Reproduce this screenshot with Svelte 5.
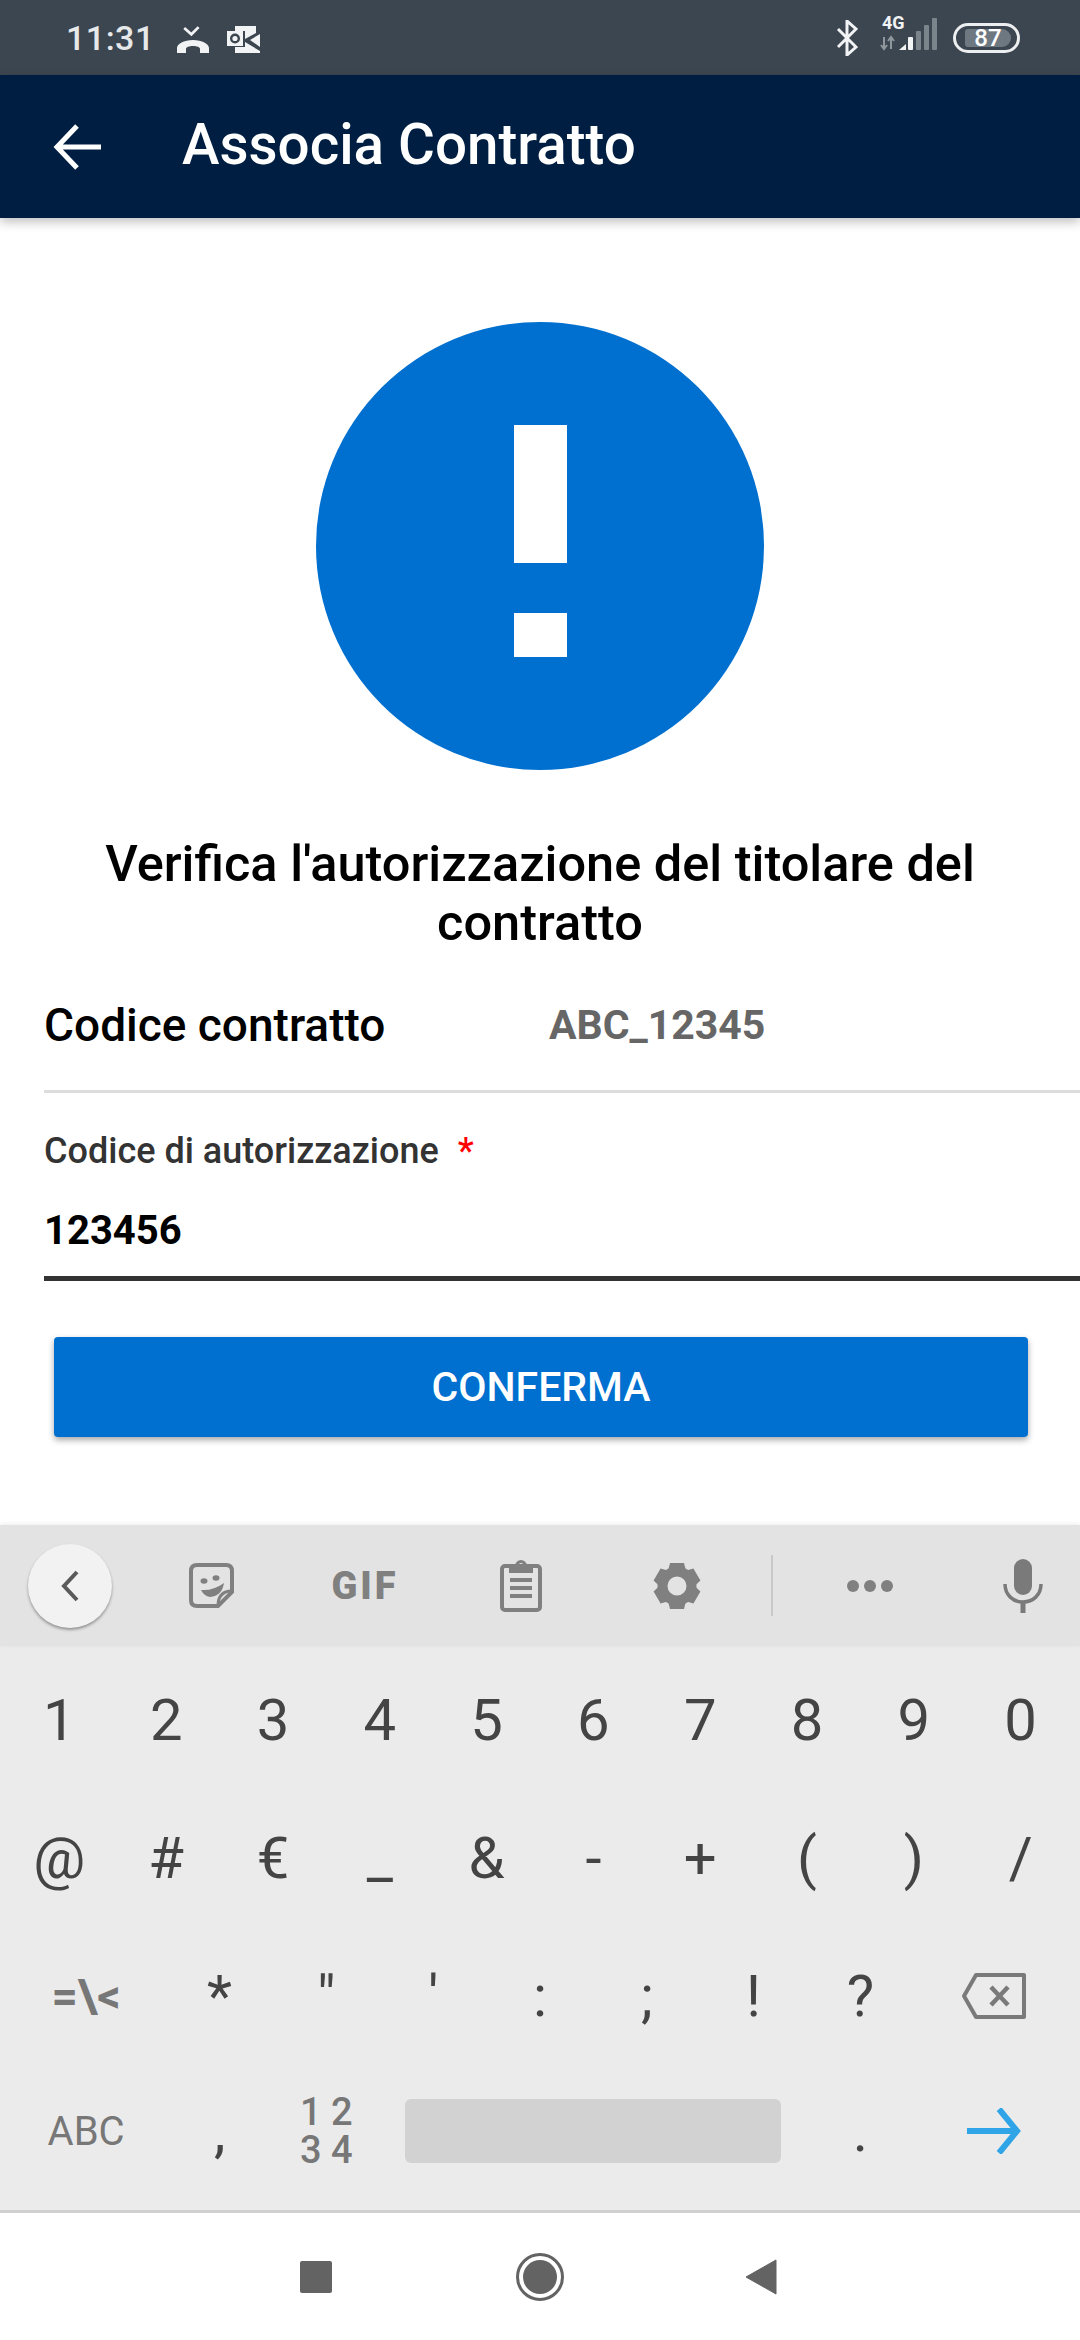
<script lang="ts">
	const digits = ['1', '2', '3', '4', '5', '6', '7', '8', '9', '0'];
	const symbols = ['@', '#', '€', '_', '&', '-', '+', '(', ')', '/'];
	const punctuation = ['*', '"', "'", ':', ';', '!', '?'];
</script>

<div class="phone">
	<div class="statusbar">
		<div class="status-left">
			<span class="time">11:31</span>
			<svg class="ic-call" viewBox="0 0 32 27" width="32" height="27">
				<path d="M8 0l8 7 8-8" transform="translate(0 2) scale(.9)" fill="none" stroke="#f2f3f4" stroke-width="3" />
				<path d="M0 27v-5c0-4 7-8 16-8s16 4 16 8v5h-9v-4c0-2-3-3-7-3s-7 1-7 3v4z" fill="#f2f3f4" />
			</svg>
			<svg class="ic-outlook" viewBox="0 0 34 27" width="34" height="27">
				<path d="M9 0h21v7L19 13V5H9z" fill="#f2f3f4" />
				<path d="M34 8L24 14l10 7z" fill="#f2f3f4" />
				<path d="M9 21h10v-5l15 9v2H9z" fill="#f2f3f4" />
				<rect x="1" y="5" width="16" height="15" fill="#f2f3f4" />
				<circle cx="9" cy="12.500" r="3.800" fill="none" stroke="#3c4650" stroke-width="2.400" />
			</svg>
		</div>
		<div class="status-right">
			<svg viewBox="0 0 22 36" width="22" height="36">
				<path d="M2 9l18 18-9 8V1l9 8L2 27" fill="none" stroke="#f2f3f4" stroke-width="3" />
			</svg>
			<div class="signal">
				<span class="fourg">4G</span>
				<svg viewBox="0 0 58 34" width="58" height="34">
					<path d="M4 20v12M1 28l3 4 3-4" fill="none" stroke="#8f979d" stroke-width="2" />
					<path d="M11 32V20M8 24l3-4 3 4" fill="none" stroke="#8f979d" stroke-width="2" />
					<path d="M19 33l7-6v6z" fill="#f2f3f4" />
					<rect x="28" y="20" width="5" height="13" rx="1" fill="#f2f3f4" />
					<rect x="36" y="14" width="5" height="19" rx="1" fill="#7c848b" />
					<rect x="44" y="8" width="5" height="25" rx="1" fill="#7c848b" />
					<rect x="52" y="1" width="5" height="32" rx="1" fill="#7c848b" />
				</svg>
			</div>
			<div class="battery"><span class="battery-fill">87</span></div>
		</div>
	</div>

	<header class="appbar">
		<svg viewBox="0 0 48 46" width="48" height="46">
			<path d="M3 23h45M24 2L4 23l20 21" fill="none" stroke="#fff" stroke-width="5" />
		</svg>
		<h1>Associa Contratto</h1>
	</header>

	<main class="content">
		<div class="alert">
			<span class="bar"></span>
			<span class="dot"></span>
		</div>
		<h2>Verifica l'autorizzazione del titolare del contratto</h2>
		<div class="code-row">
			<span class="code-label">Codice contratto</span>
			<span class="code-value">ABC_12345</span>
		</div>
		<div class="field">
			<div class="field-label">Codice di autorizzazione <span class="req">*</span></div>
			<div class="field-value">123456</div>
		</div>
		<button class="confirm">CONFERMA</button>
	</main>

	<div class="toolbar">
		<div class="tool"><span class="back-circle">
			<svg viewBox="0 0 20 32" width="20" height="32"><path d="M17 2L4 16l13 14" fill="none" stroke="#5a5a5a" stroke-width="4" /></svg>
		</span></div>
		<div class="tool">
			<svg viewBox="0 0 45 45" width="45" height="45">
				<path d="M8 2h29q6 0 6 6v21L29 43H8q-6 0-6-6V8q0-6 6-6z" fill="none" stroke="#808080" stroke-width="4" />
				<path d="M43 28q-14 0-14 15" fill="none" stroke="#808080" stroke-width="3" />
				<ellipse cx="15" cy="18" rx="3.500" ry="2.800" fill="#808080" />
				<ellipse cx="27" cy="15" rx="3.500" ry="2.800" fill="#808080" />
				<path d="M12 27Q24 28 35 20 33 33 21 34 15 33 12 27z" fill="#808080" />
			</svg>
		</div>
		<div class="tool"><span class="gif">GIF</span></div>
		<div class="tool">
			<svg viewBox="0 0 42 52" width="42" height="52">
				<rect x="2" y="6" width="38" height="44" rx="3" fill="none" stroke="#808080" stroke-width="4" />
				<path fill-rule="evenodd" d="M9 6h6a6 6 0 0 1 12 0h6v7H9zM21 3a2.500 2.500 0 1 0 .01 0z" fill="#808080" />
				<path d="M10 20h22M10 28h22M10 36h22" stroke="#808080" stroke-width="4" />
			</svg>
		</div>
		<div class="tool">
			<svg viewBox="0 0 48 48" width="48" height="48">
				<circle cx="24" cy="24" r="14.500" fill="none" stroke="#808080" stroke-width="10" />
				<path d="M17 1h14l2 8H15zM15 39h18l-2 8H17z" fill="#808080" />
				<path d="M17 1h14l2 8H15zM15 39h18l-2 8H17z" fill="#808080" transform="rotate(60 24 24)" />
				<path d="M17 1h14l2 8H15zM15 39h18l-2 8H17z" fill="#808080" transform="rotate(120 24 24)" />
			</svg>
		</div>
		<div class="tool"><span class="vline"></span></div>
		<div class="tool dots"><span></span><span></span><span></span></div>
		<div class="tool mic">
			<svg viewBox="0 0 40 54" width="40" height="54">
				<rect x="11" y="0" width="18" height="36" rx="9" fill="#7a7a7a" />
				<path d="M2 25c0 11 8 18 18 18s18-7 18-18" fill="none" stroke="#7a7a7a" stroke-width="3.500" />
				<rect x="17.500" y="42" width="5" height="12" fill="#7a7a7a" />
			</svg>
		</div>
	</div>

	<div class="keyboard">
		{#each digits as k}
			<span class="key">{k}</span>
		{/each}
		{#each symbols as k}
			<span class="key">{k}</span>
		{/each}
		<span class="key wide gray sym">=\&lt;</span>
		{#each punctuation as k}
			<span class="key">{k}</span>
		{/each}
		<span class="key wide">
			<svg viewBox="0 0 64 46" width="64" height="46">
				<path d="M14 2h48v42H14L2 23z" fill="none" stroke="#7a7a7a" stroke-width="4" stroke-linejoin="round" />
				<path d="M29 14l17 18M46 14L29 32" stroke="#7a7a7a" stroke-width="4.500" />
			</svg>
		</span>
		<span class="key wide gray abc">ABC</span>
		<span class="key">,</span>
		<span class="key gray nums"><span>1 2</span><span>3 4</span></span>
		<span class="space-cell"><span class="space"></span></span>
		<span class="key">.</span>
		<span class="key wide">
			<svg viewBox="0 0 54 46" width="54" height="46">
				<path d="M0 23h50M32 1l18 22-18 22" fill="none" stroke="#2fa4e7" stroke-width="6" />
			</svg>
		</span>
	</div>

	<nav class="navbar">
		<span class="nav-square"></span>
		<span class="nav-home"><span></span></span>
		<svg viewBox="0 0 32 36" width="32" height="36"><path d="M31 1v34L1 18z" fill="#636363" stroke="#636363" stroke-linejoin="round" /></svg>
	</nav>
</div>

<style>
	:global(body) {
		margin: 0;
	}

	.phone {
		width: 1080px;
		height: 2340px;
		display: flex;
		flex-direction: column;
		background: #fff;
		overflow: hidden;
		font-family: Roboto, "Noto Sans", sans-serif;
	}

	.statusbar {
		height: 75px;
		background: #3c4650;
		display: flex;
		justify-content: space-between;
		align-items: center;
		padding: 0 60px 0 66px;
		box-sizing: border-box;
	}

	.status-left, .status-right {
		display: flex;
		align-items: center;
	}

	.time {
		font-size: 34px;
		font-weight: 500;
		color: #e6e8ea;
		letter-spacing: 0.5px;
	}

	.ic-call { margin-left: 22px; margin-top: 4px; }
	.ic-outlook { margin-left: 17px; margin-top: 4px; }

	.signal {
		position: relative;
		margin-left: 22px;
		height: 34px;
	}

	.signal svg { display: block; margin-top: -4px; }

	.fourg {
		position: absolute;
		left: 2px;
		top: -9px;
		font-size: 18px;
		font-weight: 700;
		color: #f2f3f4;
	}

	.battery {
		margin-left: 15px;
		width: 67px;
		height: 30px;
		border: 3px solid #eceef0;
		border-radius: 17px;
		box-sizing: border-box;
		padding: 3px 5px;
		display: flex;
	}

	.battery-fill {
		flex: 1;
		margin-left: 4px;
		margin-right: 1px;
		background: #6e7880;
		border-radius: 3px 9px 9px 3px;
		color: #fff;
		font-size: 24px;
		font-weight: 500;
		line-height: 18px;
		text-align: center;
	}

	.appbar {
		height: 143px;
		background: #001e41;
		display: flex;
		align-items: center;
		padding-left: 53px;
		box-shadow: 0 4px 10px rgba(0, 0, 0, 0.25);
		position: relative;
	}

	h1 {
		margin: -3px 0 0 81px;
		font-size: 56.500px;
		font-weight: 500;
		color: #fff;
	}

	.content {
		flex: 1;
		padding-top: 104px;
		display: flex;
		flex-direction: column;
	}

	.alert {
		width: 448px;
		height: 448px;
		border-radius: 50%;
		background: #0070d0;
		align-self: center;
		display: flex;
		flex-direction: column;
		align-items: center;
		padding-top: 103px;
		box-sizing: border-box;
	}

	.bar { width: 53px; height: 138px; background: #fff; }
	.dot { width: 53px; height: 44px; background: #fff; margin-top: 50px; }

	h2 {
		margin: 64px 80px 0;
		text-align: center;
		font-size: 50.500px;
		line-height: 59px;
		font-weight: 500;
		color: #000;
	}

	.code-row {
		margin: 0 0 0 44px;
		height: 141px;
		padding-top: 8px;
		box-sizing: border-box;
		border-bottom: 3px solid #ddd;
		display: flex;
		align-items: center;
	}

	.code-label {
		width: 505px;
		font-size: 46px;
		font-weight: 500;
		color: #000;
	}

	.code-value {
		font-size: 41px;
		font-weight: 700;
		color: #666;
	}

	.field {
		margin-left: 44px;
		padding-top: 37px;
		height: 188px;
		box-sizing: border-box;
		border-bottom: 5px solid #333;
	}

	.field-label {
		font-size: 36px;
		line-height: 42px;
		font-weight: 500;
		color: #333;
	}

	.req {
		color: #f00;
		margin-left: 10px;
	}

	.field-value {
		margin-top: 34px;
		font-size: 40px;
		line-height: 50px;
		font-weight: 700;
		color: #000;
	}

	.confirm {
		margin: 56px 52px 0 54px;
		height: 100px;
		background: #0070d0;
		color: #fff;
		border: none;
		border-radius: 4px;
		font-family: inherit;
		font-size: 41px;
		font-weight: 500;
		box-shadow: 0 3px 6px rgba(0, 0, 0, 0.35);
	}

	.toolbar {
		height: 121px;
		background: #e3e3e3;
		display: grid;
		grid-template-columns: 140px 142px 166px 146px 166px 24px 172px 1fr;
		box-shadow: 0 -1px 4px rgba(0, 0, 0, 0.08);
		position: relative;
	}

	.tool {
		display: flex;
		align-items: center;
		justify-content: center;
	}

	.back-circle {
		width: 84px;
		height: 84px;
		border-radius: 50%;
		background: #f2f2f2;
		box-shadow: 0 2px 3px rgba(0, 0, 0, 0.35);
		display: flex;
		align-items: center;
		justify-content: center;
	}

	.gif {
		font-size: 38px;
		font-weight: 900;
		color: #808080;
		letter-spacing: 3px;
	}

	.vline { width: 2px; height: 61px; background: #c8c8c8; }

	.dots { gap: 5px; }
	.dots span { width: 12px; height: 12px; border-radius: 50%; background: #808080; }

	.mic { padding-left: 10px; }

	.keyboard {
		height: 567px;
		box-sizing: border-box;
		background: #ebebeb;
		padding: 5px 6px 12px;
		display: grid;
		grid-template-columns: repeat(20, 1fr);
		grid-template-rows: 138px 138px 138px 132px;
		color: #444;
		border-bottom: 3px solid #d0d0d0;
	}

	.key {
		grid-column: span 2;
		display: flex;
		align-items: center;
		justify-content: center;
		font-size: 58px;
		font-weight: 400;
	}

	.wide { grid-column: span 3; }

	.gray { color: #777; }

	.sym { font-size: 46px; font-weight: 700; }
	.abc { font-size: 40px; }

	.nums {
		flex-direction: column;
		font-size: 38px;
		line-height: 38px;
		font-weight: 500;
	}

	.space-cell {
		grid-column: span 8;
		display: flex;
		align-items: center;
		padding: 0 26px 0 25px;
	}

	.space {
		flex: 1;
		height: 64px;
		background: #d2d2d2;
		border-radius: 6px;
	}

	.navbar {
		flex: 0 0 127px;
		background: #fff;
		display: flex;
		align-items: center;
		padding-left: 300px;
	}

	.nav-square {
		width: 32px;
		height: 32px;
		background: #636363;
		border-radius: 2px;
	}

	.nav-home {
		width: 48px;
		height: 48px;
		border: 3px solid #636363;
		border-radius: 50%;
		box-sizing: border-box;
		margin-left: 184px;
		margin-right: 181px;
		display: flex;
		align-items: center;
		justify-content: center;
	}

	.nav-home span {
		width: 34px;
		height: 34px;
		border-radius: 50%;
		background: #636363;
	}
</style>
